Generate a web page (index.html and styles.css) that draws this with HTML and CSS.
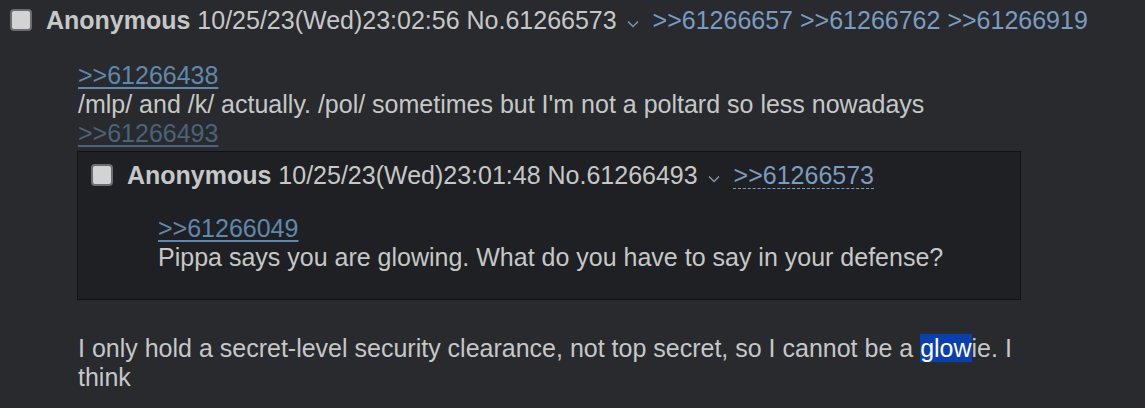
FILE: index.html
```html
<!DOCTYPE html>
<html lang="en">
<head>
    <meta charset="UTF-8">
    <title>/mlp/ - Thread</title>
    <link rel="stylesheet" href="styles.css">
</head>
<body>
<div class="post">
    <div class="post-info">
        <span class="check"></span>
        <span class="name">Anonymous</span> <span class="date">10/25/23(Wed)23:02:56</span> <span class="num">No.61266573</span>
        <svg class="menu" width="12" height="8" viewBox="0 0 12 8"><path d="M1 1.5 L6 6.5 L11 1.5" fill="none" stroke="currentColor" stroke-width="1.4"/></svg>
        <a class="backlink" href="#">&gt;&gt;61266657</a> <a class="backlink" href="#">&gt;&gt;61266762</a> <a class="backlink" href="#">&gt;&gt;61266919</a>
    </div>

    <blockquote class="message">
        <a class="quotelink" href="#">&gt;&gt;61266438</a><br>
        /mlp/ and /k/ actually. /pol/ sometimes but I'm not a poltard so less nowadays<br>
        <a class="quotelink inlined" href="#">&gt;&gt;61266493</a>

        <!-- inlined quoted post -->
        <div class="inline">
            <div class="post-info">
                <span class="check"></span>
                <span class="name">Anonymous</span> <span class="date">10/25/23(Wed)23:01:48</span> <span class="num">No.61266493</span>
                <svg class="menu" width="12" height="8" viewBox="0 0 12 8"><path d="M1 1.5 L6 6.5 L11 1.5" fill="none" stroke="currentColor" stroke-width="1.4"/></svg>
                <a class="backlink dashed" href="#">&gt;&gt;61266573</a>
            </div>
            <blockquote class="message">
                <a class="quotelink" href="#">&gt;&gt;61266049</a><br>
                Pippa says you are glowing. What do you have to say in your defense?
            </blockquote>
        </div>

        <p class="after">I only hold a secret-level security clearance, not top secret, so I cannot be a <span class="sel">glow</span>ie. I think</p>
    </blockquote>
</div>
</body>
</html>
```

FILE: styles.css
```css
:root {
    --bg: #282a2e;
    --inline-bg: #1f2023;
    --text: #c5c8c6;
    --link: #5f89ac;
    --backlink: #7a9cc0;
}

body {
    margin: 0;
    background: var(--bg);
    color: var(--text);
    font-family: "Liberation Sans", Arial, sans-serif;
    font-size: 25px;
    line-height: 29px;
}

.post {
    padding: 6px 0 0 10px;
}

.post-info {
    white-space: nowrap;
    height: 29px;
}

.check {
    display: inline-block;
    vertical-align: -2px;
    width: 18px;
    height: 18px;
    background: #d3d3d3;
    border: 2px solid #6c6d70;
    border-radius: 4px;
    margin-right: 7px;
}

.name {
    font-weight: bold;
}

.menu {
    color: #8396ad;
    margin: 0 7px 0 3px;
    vertical-align: 1px;
}

.backlink {
    color: var(--backlink);
    text-decoration: none;
}

.backlink.dashed {
    text-decoration: underline dashed;
    text-decoration-thickness: 1px;
    text-underline-offset: 4px;
}

.message {
    margin: 26px 0 0 68px;
}

.quotelink {
    color: var(--link);
    text-decoration: underline;
    text-underline-offset: 3px;
}

.quotelink.inlined {
    opacity: 0.6;
}

/* quoted post shown inline */
.inline {
    background: var(--inline-bg);
    border: 1px solid #111213;
    width: 929px;
    padding: 9px 0 27px 13px;
    margin: 3px 0 0 -1px;
}

.inline .message {
    margin: 24px 0 0 67px;
}

.after {
    margin: 34px 0 0;
    width: 960px;
}

.sel {
    background: #0a3fae;
    color: #fff;
}
```
